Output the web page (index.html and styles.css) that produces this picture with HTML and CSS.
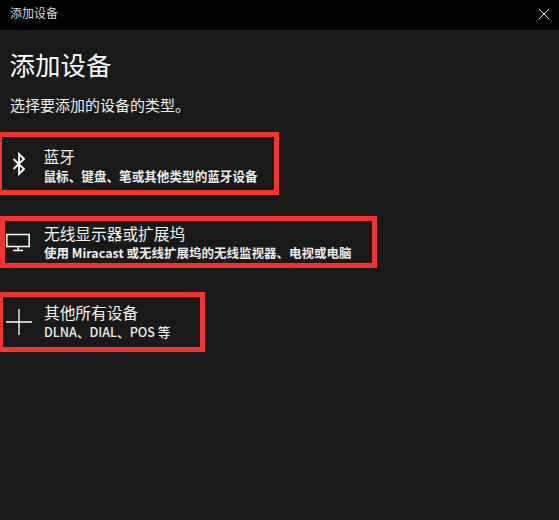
FILE: index.html
```html
<!DOCTYPE html>
<html lang="zh-CN">
<head>
<meta charset="utf-8">
<title>添加设备</title>
<link rel="stylesheet" href="styles.css">
</head>
<body>
<div class="titlebar">
  <span class="titlebar-text">添加设备</span>
  <svg class="close" width="12" height="12" viewBox="0 0 12 12"><path d="M1 1L11 11M11 1L1 11" stroke="#e0e0e0" stroke-width="1" fill="none"/></svg>
</div>
<main class="content">
  <h1 class="heading">添加设备</h1>
  <p class="intro">选择要添加的设备的类型。</p>
  <div class="option option-bt">
    <svg class="icon" width="24" height="26" viewBox="0 0 24 26"><path d="M7.5 8L18 18L13 23V3L18 8L7.5 18" stroke="#fff" stroke-width="1.8" fill="none"/></svg>
    <div class="text">
      <div class="name">蓝牙</div>
      <div class="desc">鼠标、键盘、笔或其他类型的蓝牙设备</div>
    </div>
  </div>
  <div class="option option-display">
    <svg class="icon" width="24" height="20" viewBox="0 0 24 20"><path d="M.8 2.5H23.2V14.5H.8ZM12 14.5V18M7 18.5H17" stroke="#fff" stroke-width="1.5" fill="none"/></svg>
    <div class="text">
      <div class="name">无线显示器或扩展坞</div>
      <div class="desc">使用 Miracast 或无线扩展坞的无线监视器、电视或电脑</div>
    </div>
  </div>
  <div class="option option-other">
    <svg class="icon" width="26" height="26" viewBox="0 0 26 26"><path d="M13 0V26M0 13H26" stroke="#fff" stroke-width="1.3" fill="none"/></svg>
    <div class="text">
      <div class="name">其他所有设备</div>
      <div class="desc">DLNA、DIAL、POS 等</div>
    </div>
  </div>
</main>
</body>
</html>
```
FILE: styles.css
```css
html, body {
  margin: 0;
  height: 100%;
}
body {
  background: #191919;
  color: #fff;
  font-family: "Noto Sans CJK SC", "Noto Sans", sans-serif;
  overflow: hidden;
}
.titlebar {
  height: 30px;
  background: #000;
  display: flex;
  align-items: center;
  justify-content: space-between;
  padding: 0 10px;
}
.titlebar-text {
  font-size: 12px;
  line-height: 16px;
  margin-bottom: 4px;
  color: #d8d8d8;
}
.close {
  margin-top: -3px;
  margin-right: -1px;
}
.content {
  display: flex;
  flex-direction: column;
  align-items: flex-start;
}
.heading {
  margin: 14px 0 0 9.5px;
  font-size: 25.5px;
  line-height: 40px;
  font-weight: 400;
}
.intro {
  margin: 10px 0 0 10px;
  font-size: 15px;
  line-height: 22px;
  color: #f0f0f0;
}
.option {
  box-sizing: border-box;
  display: flex;
  align-items: center;
  border: 5px solid #f23434;
  background: #191919;
}
.option-bt {
  margin-top: 16px;
  height: 63px;
  width: 279px;
  border-left-width: 2px;
}
.option-display {
  margin-top: 21px;
  height: 52px;
  width: 377px;
}
.option-other {
  margin-top: 24px;
  height: 60px;
  width: 205px;
  border-left-width: 3px;
}
.icon {
  flex: none;
}
.option-bt .icon {
  margin: 0 13.5px 0 4px;
}
.option-display .icon {
  margin: 0 14px 0 1px;
}
.option-other .icon {
  margin: 0 12px 0 3px;
}
.option-bt .text {
  margin-top: 3px;
}
.option-other .text {
  margin-bottom: 2px;
}
.name {
  font-size: 15.7px;
  line-height: 20px;
  color: #f4f4f4;
}
.desc {
  font-size: 12.6px;
  line-height: 17px;
  font-weight: 700;
  color: #ededed;
  white-space: nowrap;
}
.option-display .desc {
  font-size: 12.5px;
}
.option-other .desc {
  font-size: 12.6px;
  font-weight: 500;
}
```
